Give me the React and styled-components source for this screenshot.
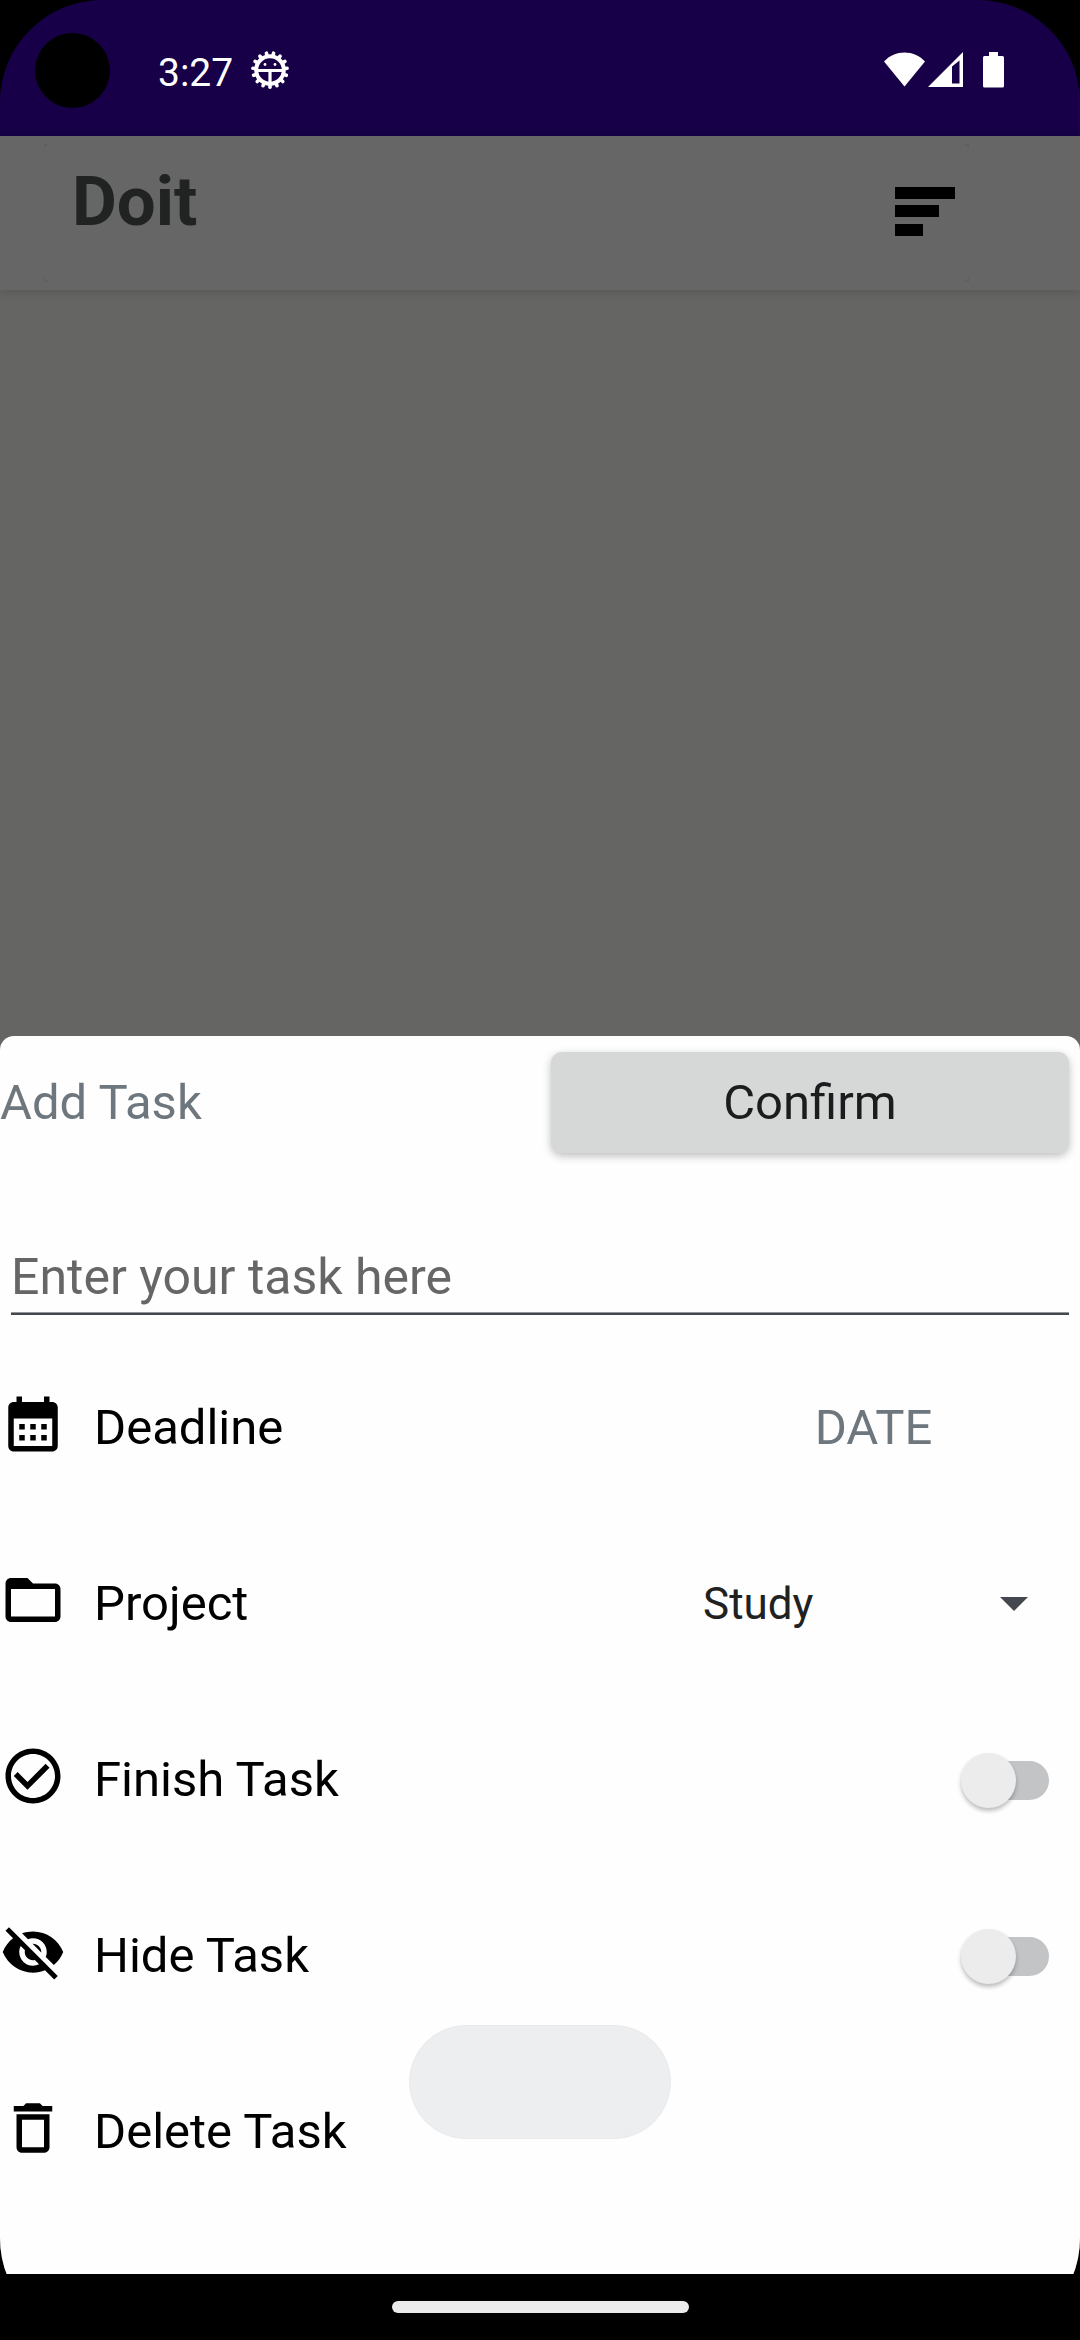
import React, { useState } from 'react';
import styled, { createGlobalStyle } from 'styled-components';

const GlobalStyle = createGlobalStyle`
  *, *::before, *::after { box-sizing: border-box; }
  body { margin: 0; background: #000; font-family: Roboto, "Noto Sans", sans-serif; }
  button, input, select { font-family: inherit; margin: 0; }
`;

const Screen = styled.div`
  display: flex;
  flex-direction: column;
  min-height: 100vh;
  overflow: hidden;
  border-radius: 102px;
  background: #000;
`;

const StatusBar = styled.header`
  display: flex;
  align-items: center;
  justify-content: space-between;
  height: 136px;
  padding: 4px 76px 0 35px;
  background: #170047;
  color: #fff;
`;

const StatusGroup = styled.div`
  display: flex;
  align-items: center;
  gap: 18px;
`;

const Camera = styled.span`
  width: 75px;
  height: 75px;
  margin-right: 30px;
  border-radius: 50%;
  background: #000;
`;

const Clock = styled.time`
  padding-top: 5px;
  font-size: 39px;
  line-height: 46px;
`;

const AppBar = styled.div`
  position: relative;
  z-index: 1;
  padding: 8px 111px 8px 44px;
  background: #666;
  box-shadow: 0 2px 10px rgba(0, 0, 0, 0.14);
`;

const TitleFrame = styled.div`
  background: #5f5f5f;
`;

const TitleCard = styled.div`
  display: flex;
  align-items: center;
  justify-content: space-between;
  height: 138px;
  padding: 0 14px 0 28px;
  border-radius: 7px;
  background: #666;
`;

const Title = styled.h1`
  margin: 0;
  padding-bottom: 22px;
  color: #202322;
  font-size: 69px;
  font-weight: 700;
  line-height: 80px;
`;

const MenuButton = styled.button`
  display: flex;
  padding: 0 0 4px;
  border: 0;
  background: none;
`;

const Backdrop = styled.main`
  display: flex;
  flex: 1;
  flex-direction: column;
  justify-content: flex-end;
  background: #656563;
`;

const Sheet = styled.form`
  position: relative;
  padding-bottom: 54px;
  border-radius: 14px 14px 0 0;
  background: #fefefe;
`;

const SheetHeader = styled.div`
  display: grid;
  grid-template-columns: 1fr 1fr;
  align-items: center;
  padding: 16px 0;
`;

const SheetTitle = styled.h2`
  margin: 0;
  color: #6e777d;
  font-size: 49px;
  font-weight: 400;
  line-height: 60px;
`;

const ConfirmButton = styled.button`
  height: 101px;
  margin: 0 11px;
  border: 0;
  border-radius: 11px;
  background: #d6d8d7;
  box-shadow: 0 3px 8px rgba(0, 0, 0, 0.26);
  color: #1a1c1e;
  font-size: 49px;
  line-height: 60px;
`;

const TaskField = styled.div`
  padding: 71px 11px 25px;
`;

const TaskInput = styled.input`
  display: block;
  width: 100%;
  height: 75px;
  padding: 0;
  border: 0;
  border-bottom: 2px solid #43474e;
  border-radius: 0;
  outline: 0;
  background: transparent;
  box-shadow: inset 0 -1px #92959a;
  color: #1a1c1e;
  font-size: 50px;

  &::placeholder { color: #666; opacity: 1; }
`;

const Row = styled.div`
  display: flex;
  align-items: center;
  height: 176px;
`;

const IconSlot = styled.span`
  display: flex;
  margin-right: 28px;
  padding-bottom: 8px;
`;

const rowText = `
  flex: 1;
  color: #000;
  font-size: 49px;
  line-height: 60px;
  text-align: left;
`;

const RowLabel = styled.label`${rowText}`;

const RowAction = styled.button`
  ${rowText}
  padding: 0;
  border: 0;
  background: none;
`;

const DateButton = styled.button`
  width: 413px;
  padding: 0;
  border: 0;
  background: none;
  color: #6e777d;
  font-size: 49px;
  line-height: 60px;
`;

const SelectBox = styled.div`
  display: grid;
  align-items: center;
  width: 413px;
  padding: 0 52px 0 32px;

  & > * { grid-area: 1 / 1; }
`;

const Arrow = styled.svg`
  justify-self: end;
  pointer-events: none;
`;

const ProjectSelect = styled.select`
  width: 100%;
  height: 66px;
  padding: 0 4px;
  border: 0;
  appearance: none;
  background: transparent;
  color: #212121;
  font-size: 44px;
`;

const Switch = styled.input`
  display: flex;
  align-items: center;
  width: 81px;
  height: 39px;
  margin: 0 31px 0 0;
  border-radius: 20px;
  appearance: none;
  background: #c3c4c6;

  &::before {
    content: "";
    flex: none;
    width: 55px;
    height: 55px;
    margin-left: ${({ checked }) => (checked ? 33 : -7)}px;
    border-radius: 50%;
    background: #ececec;
    box-shadow: 0 3px 4px rgba(0, 0, 0, 0.26);
  }
`;

const Toast = styled.div`
  position: absolute;
  bottom: 135px;
  left: calc(50% - 131px);
  width: 262px;
  height: 114px;
  border: 1px solid #e9eaec;
  border-radius: 57px;
  background: #edeef0;
`;

const NavBar = styled.footer`
  display: flex;
  align-items: center;
  justify-content: center;
  height: 66px;
`;

const HomePill = styled.span`
  width: 297px;
  height: 12px;
  border-radius: 6px;
  background: #ebebeb;
`;

const ICONS = {
  calendar:
    'M19 4h-1V2h-2v2H8V2H6v2H5c-1.11 0-1.99.9-1.99 2L3 20c0 1.1.89 2 2 2h14c1.1 0 2-.9 2-2V6c0-1.1-.9-2-2-2zm0 16H5V10h14v10zM9 14H7v-2h2v2zm4 0h-2v-2h2v2zm4 0h-2v-2h2v2zm-8 4H7v-2h2v2zm4 0h-2v-2h2v2zm4 0h-2v-2h2v2z',
  folder:
    'M20 6h-8l-2-2H4c-1.1 0-1.99.9-1.99 2L2 18c0 1.1.9 2 2 2h16c1.1 0 2-.9 2-2V8c0-1.1-.9-2-2-2zm0 12H4V8h16v10z',
  check:
    'M16.59 7.58L10 14.17l-3.59-3.58L5 12l5 5 8-8zM12 2C6.48 2 2 6.48 2 12s4.48 10 10 10 10-4.48 10-10S17.52 2 12 2zm0 18c-4.42 0-8-3.58-8-8s3.58-8 8-8 8 3.58 8 8-3.58 8-8 8z',
  hidden:
    'M12 7c2.76 0 5 2.24 5 5 0 .65-.13 1.26-.36 1.83l2.92 2.92c1.51-1.26 2.7-2.89 3.43-4.75-1.73-4.39-6-7.5-11-7.5-1.4 0-2.74.25-3.98.7l2.16 2.16C10.74 7.13 11.35 7 12 7zM2 4.27l2.28 2.28.46.46C3.08 8.3 1.78 10.02 1 12c1.73 4.39 6 7.5 11 7.5 1.55 0 3.03-.3 4.38-.84l.42.42L19.73 22 21 20.73 3.27 3 2 4.27zM7.53 9.8l1.55 1.55c-.05.21-.08.43-.08.65 0 1.66 1.34 3 3 3 .22 0 .44-.03.65-.08l1.55 1.55c-.67.33-1.41.53-2.2.53-2.76 0-5-2.24-5-5 0-.79.2-1.53.53-2.2zm4.31-.78l3.15 3.15.02-.16c0-1.66-1.34-3-3-3l-.17.01z',
  trash:
    'M16 9v10H8V9h8m-1.5-6h-5l-1 1H5v2h14V4h-3.5l-1-1zM18 7H6v12c0 1.1.9 2 2 2h8c1.1 0 2-.9 2-2V7z',
};

function RowIcon({ name }) {
  return (
    <IconSlot>
      <svg width="66" height="66" viewBox="0 0 24 24" aria-hidden="true">
        <path d={ICONS[name]} />
      </svg>
    </IconSlot>
  );
}

function GearIcon() {
  const teeth = Array.from({ length: 15 }, (_, i) => i * 24 + 12);
  return (
    <svg width="38" height="38" viewBox="-19 -19 38 38" fill="none" stroke="#fff" aria-hidden="true">
      <circle r="13.8" strokeWidth="4" />
      {teeth.map((a) => (
        <path key={a} d="M0-15V-17.2" strokeWidth="3.6" strokeLinecap="round" transform={`rotate(${a})`} />
      ))}
      <path d="M-14 0.500H14M0 0.500V15" strokeWidth="3.2" />
      <circle cx="-5" cy="-5.500" r="1.400" fill="#fff" stroke="none" />
      <circle cx="5" cy="-5.500" r="1.400" fill="#fff" stroke="none" />
    </svg>
  );
}

function SignalIcons() {
  return (
    <svg width="120" height="36" viewBox="0 0 120 36" fill="#fff" aria-hidden="true">
      <path d="M0 9.500C11-2.500 30-2.500 41 9.500L20.500 34.500Z" />
      <path fillRule="evenodd" d="M44 35L79 0V35ZM68 14.500V31.500H75.500V8.500Z" />
      <path d="M105 0h9v4h4.500a1.500 1.500 0 0 1 1.500 1.500v28.500a1.500 1.500 0 0 1-1.500 1.500h-18a1.500 1.500 0 0 1-1.500-1.500V5.500a1.500 1.500 0 0 1 1.500-1.500h4.500z" />
    </svg>
  );
}

function SwitchRow({ id, icon, label }) {
  const [on, setOn] = useState(false);
  return (
    <Row>
      <RowIcon name={icon} />
      <RowLabel htmlFor={id}>{label}</RowLabel>
      <Switch id={id} type="checkbox" checked={on} onChange={() => setOn(!on)} />
    </Row>
  );
}

export default function App() {
  return (
    <Screen>
      <GlobalStyle />
      <StatusBar>
        <StatusGroup>
          <Camera />
          <Clock>3:27</Clock>
          <GearIcon />
        </StatusGroup>
        <SignalIcons />
      </StatusBar>
      <AppBar>
        <TitleFrame>
          <TitleCard>
            <Title>Doit</Title>
            <MenuButton type="button" aria-label="Menu">
              <svg width="60" height="49" viewBox="0 0 60 49" aria-hidden="true">
                <path d="M0 0h60v12H0zM0 18h44v12H0zM0 37h28v12H0z" />
              </svg>
            </MenuButton>
          </TitleCard>
        </TitleFrame>
      </AppBar>
      <Backdrop>
        <Sheet onSubmit={(e) => e.preventDefault()}>
          <SheetHeader>
            <SheetTitle>Add Task</SheetTitle>
            <ConfirmButton type="submit">Confirm</ConfirmButton>
          </SheetHeader>
          <TaskField>
            <TaskInput type="text" aria-label="Task" placeholder="Enter your task here" />
          </TaskField>
          <Row>
            <RowIcon name="calendar" />
            <RowLabel htmlFor="deadline">Deadline</RowLabel>
            <DateButton id="deadline" type="button">DATE</DateButton>
          </Row>
          <Row>
            <RowIcon name="folder" />
            <RowLabel htmlFor="project">Project</RowLabel>
            <SelectBox>
              <ProjectSelect id="project" defaultValue="Study">
                <option>Study</option>
              </ProjectSelect>
              <Arrow width="28" height="14" viewBox="0 0 28 14" aria-hidden="true">
                <path d="M0 0h28L14 14z" fill="#43474e" />
              </Arrow>
            </SelectBox>
          </Row>
          <SwitchRow id="finish" icon="check" label="Finish Task" />
          <SwitchRow id="hide" icon="hidden" label="Hide Task" />
          <Row>
            <RowIcon name="trash" />
            <RowAction type="button">Delete Task</RowAction>
          </Row>
          <Toast role="status" />
        </Sheet>
      </Backdrop>
      <NavBar>
        <HomePill />
      </NavBar>
    </Screen>
  );
}
